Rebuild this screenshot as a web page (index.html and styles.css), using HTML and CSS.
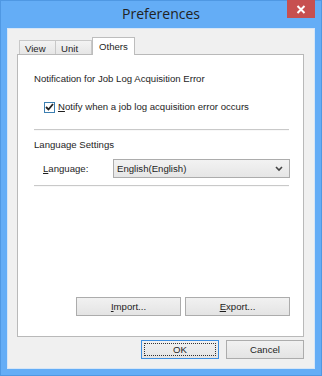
FILE: index.html
```html
<!DOCTYPE html>
<html lang="en">
<head>
    <meta charset="UTF-8">
    <title>Preferences</title>
    <link rel="stylesheet" href="styles.css">
</head>
<body>
<div class="window">
    <div class="titlebar">
        <span class="title">Preferences</span>
        <div class="close">
            <svg width="10" height="9" viewBox="0 0 10 9"><path d="M1.5 1 L8.5 8 M8.5 1 L1.5 8" stroke="#fff" stroke-width="2"/></svg>
        </div>
    </div>
    <div class="client">
        <div class="tabs">
            <div class="tab">View</div>
            <div class="tab">Unit</div>
            <div class="tab active">Others</div>
        </div>
        <div class="panel">
            <div class="group-title">Notification for Job Log Acquisition Error</div>
            <div class="check">
                <span class="box">
                    <svg width="9" height="8" viewBox="0 0 9 8"><path d="M1 4 L3.5 6.5 L8 1" fill="none" stroke="#222" stroke-width="1.8"/></svg>
                </span>
                <span><u>N</u>otify when a job log acquisition error occurs</span>
            </div>
            <div class="sep"></div>
            <div class="group-title second">Language Settings</div>
            <div class="field">
                <span class="field-label"><u>L</u>anguage:</span>
                <div class="select">
                    <span>English(English)</span>
                    <svg width="8" height="6" viewBox="0 0 8 6"><path d="M1 1 L4 4 L7 1" fill="none" stroke="#444" stroke-width="1.6"/></svg>
                </div>
            </div>
            <div class="sep"></div>
            <div class="panel-buttons">
                <div class="btn wide"><u>I</u>mport...</div>
                <div class="btn wide"><u>E</u>xport...</div>
            </div>
        </div>
        <div class="dialog-buttons">
            <div class="btn default"><span class="focus">OK</span></div>
            <div class="btn">Cancel</div>
        </div>
    </div>
</div>
</body>
</html>
```

FILE: styles.css
```css
body {
    margin: 0;
    font-family: "Liberation Sans", Arial, sans-serif;
    font-size: 9.6px;
    color: #1e1e1e;
}

.window {
    width: 322px;
    height: 376px;
    box-sizing: border-box;
    background: #64adf6;
    border: 1px solid #4f98e3;
    padding: 0 6px 6px 6px;
    display: flex;
    flex-direction: column;
}

.titlebar {
    height: 27px;
    position: relative;
    display: flex;
    justify-content: center;
    align-items: center;
}

.title {
    font-family: "Open Sans", "Noto Sans", sans-serif;
    font-size: 14px;
    color: #222;
    margin-top: -2px;
}

.close {
    position: absolute;
    right: 0;
    top: -1px;
    width: 28px;
    height: 18px;
    background: #c75050;
    display: flex;
    align-items: center;
    justify-content: center;
}

.client {
    flex: 1;
    background: #f0f0f0;
    border: 1px solid #d6e6f7;
    display: flex;
    flex-direction: column;
}

.tabs {
    display: flex;
    align-items: flex-end;
    margin: 8px 0 0 11px;
    height: 17px;
    position: relative;
    z-index: 1;
}

.tab {
    height: 14px;
    box-sizing: border-box;
    border: 1px solid #c8c8c8;
    border-bottom: none;
    background: linear-gradient(#f3f3f3, #e6e6e6);
    padding: 2px 0 0 5px;
    width: 37px;
    margin-left: -1px;
    line-height: 12px;
}

.tab:first-child {
    margin-left: 0;
}

.tab.active {
    height: 18px;
    margin-bottom: -1px;
    width: 43px;
    background: #fff;
    border-color: #bdbdbd;
    padding: 3px 0 0 6px;
    margin-left: 0;
}

.panel {
    margin: 0 10px 0 9px;
    height: 283px;
    box-sizing: border-box;
    background: #fff;
    border: 1px solid #b9b9b9;
    padding: 17px 14px 20px 16px;
    display: flex;
    flex-direction: column;
}

.group-title {
    line-height: 14px;
}

.group-title.second {
    margin-top: 7px;
}

.check {
    display: flex;
    align-items: center;
    margin: 14px 0 0 10px;
    line-height: 14px;
}

.box {
    width: 9px;
    height: 9px;
    border: 1px solid #3c7fb1;
    margin-right: 3px;
    display: flex;
    align-items: center;
    justify-content: center;
}

.sep {
    height: 1px;
    background: #c9c9c9;
    border-bottom: 1px solid #f8f8f8;
    margin-top: 15px;
}

.field {
    display: flex;
    align-items: center;
    margin: 7px 0 7px 9px;
}

.field-label {
    width: 70px;
}

.select {
    flex: 1;
    margin-right: -1px;
    height: 19px;
    box-sizing: border-box;
    border: 1px solid #acacac;
    background: linear-gradient(#f2f2f2, #e6e6e6);
    display: flex;
    align-items: center;
    justify-content: space-between;
    padding: 0 6px 0 3px;
}

.field + .sep {
    margin-top: 0;
}

.panel-buttons {
    margin-top: auto;
    display: flex;
    justify-content: flex-end;
    gap: 4px;
    margin-right: -1px;
}

.btn {
    width: 78px;
    height: 19px;
    box-sizing: border-box;
    border: 1px solid #acacac;
    background: linear-gradient(#f1f1f1, #e4e4e4);
    display: flex;
    align-items: center;
    justify-content: center;
}

.btn.wide {
    width: 105px;
}

.dialog-buttons {
    display: flex;
    justify-content: flex-end;
    gap: 7px;
    margin: 3px 10px 0 0;
}

.btn.default {
    border-color: #3c8ee0;
    padding: 2px;
}

.focus {
    flex: 1;
    align-self: stretch;
    border: 1px dotted #333;
    display: flex;
    align-items: center;
    justify-content: center;
}
```
